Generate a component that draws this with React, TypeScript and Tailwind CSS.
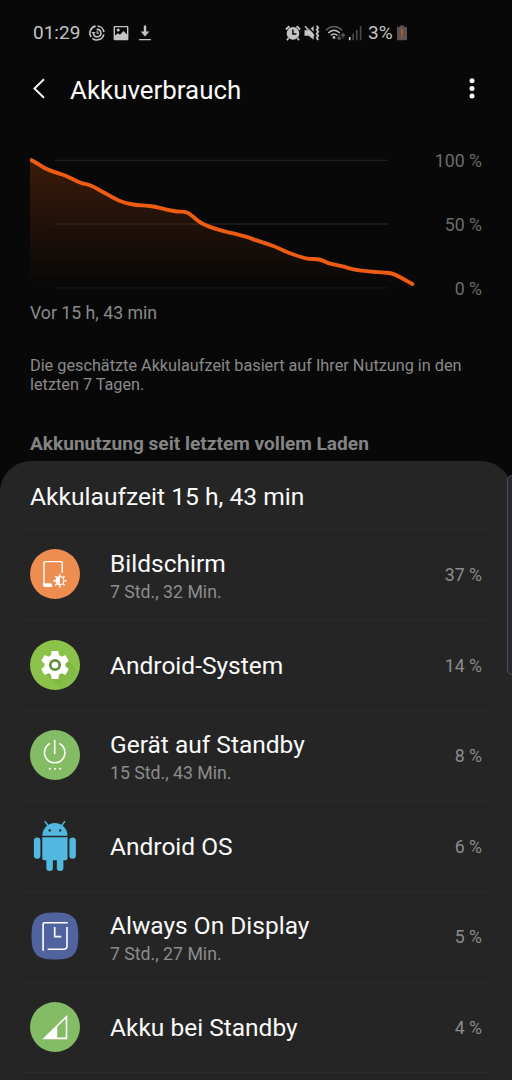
import type { ReactNode } from "react";

type Point = [number, number];

// Battery level over time, in chart pixels
const LEVELS: Point[] = [
  [0, 9.5], [6, 12.7], [15, 18.3], [25, 22.2], [36.7, 26.2], [50, 32.5], [61.7, 36], [73.3, 42.2],
  [90, 51], [103.3, 54.5], [121.7, 56.2], [136.7, 59.6], [146.7, 61.5], [157.5, 62.8],
  [171.7, 73.2], [190, 80.2], [203.3, 83.4], [218.3, 87.4], [226, 90.2], [242.7, 95.8],
  [259.3, 103], [276, 108.3], [289.3, 109.5], [299.3, 113.4], [312.7, 116.4], [326, 119.9],
  [342.7, 121.7], [354.3, 122.6], [364.3, 124.4], [382.7, 134.2],
];

const smoothPath = (pts: Point[]) => {
  let d = `M${pts[0][0]} ${pts[0][1]}`;
  for (let i = 0; i < pts.length - 1; i++) {
    const p0 = pts[i - 1] ?? pts[i];
    const p1 = pts[i];
    const p2 = pts[i + 1];
    const p3 = pts[i + 2] ?? p2;
    d += ` C${p1[0] + (p2[0] - p0[0]) / 6} ${p1[1] + (p2[1] - p0[1]) / 6} ${p2[0] - (p3[0] - p1[0]) / 6} ${p2[1] - (p3[1] - p1[1]) / 6} ${p2[0]} ${p2[1]}`;
  }
  return d;
};

const LINE = smoothPath(LEVELS);

function BatteryChart() {
  return (
    <svg width="390" height="148" viewBox="0 0 390 148" className="shrink-0">
      <defs>
        <linearGradient id="fill" x1="0" y1="9" x2="0" y2="136" gradientUnits="userSpaceOnUse">
          <stop offset="0" stopColor="#f35b12" stopOpacity="0.22" />
          <stop offset="1" stopColor="#f35b12" stopOpacity="0" />
        </linearGradient>
      </defs>
      <path d="M25 10.4H358M25 74H358" stroke="#1e1e1e" strokeWidth="1.3" />
      <path d="M25 137.8H358" stroke="#151515" strokeWidth="1.2" />
      <path d={`${LINE} V138 H0 Z`} fill="url(#fill)" />
      <path d={LINE} fill="none" stroke="#ed5c12" strokeWidth="3.9" strokeLinejoin="round" />
      <circle cx="382.5" cy="134.1" r="1.95" fill="#ed5c12" />
    </svg>
  );
}

function StatusBar() {
  return (
    <div className="flex h-[66px] shrink-0 items-center pl-[33px] text-[19px] leading-6 text-[#c4c4c4]">
      <span className="w-[47px] whitespace-nowrap">01:29</span>
      <svg width="16" height="16" viewBox="0 0 16 16" className="ml-[9px]" fill="none" stroke="#c4c4c4">
        <path d="M8.6 1A7 7 0 0 1 14.9 7.2M14.8 9.4A7 7 0 0 1 3.4 13.3M2.2 12A7 7 0 0 1 6.6 1.1" strokeWidth="1.6" />
        <path d="M4.6 9A3.7 3.7 0 1 0 7.6 4.4" strokeWidth="1.6" />
        <path d="M8.2 5.8V8.3H10" strokeWidth="1.1" />
        <path d="M2.4 6.9H6.6L4.4 9.6Z" fill="#c4c4c4" stroke="none" />
      </svg>
      <svg width="16" height="16" viewBox="0 0 16 16" className="ml-2">
        <path fill="#c4c4c4" fillRule="evenodd" d="M1.9.9H14.1Q15.4.9 15.4 2.2V13.9Q15.4 15.2 14.1 15.2H1.9Q.6 15.2.6 13.9V2.2Q.6.9 1.9.9ZM2 2.3V10.5L5 8.2 7 9.8 10.5 6 14 9.5V2.3Z" />
        <circle cx="5.2" cy="5.1" r="1.5" fill="#c4c4c4" />
      </svg>
      <svg width="12" height="16" viewBox="0 0 12 16" className="ml-[10px]" fill="#c4c4c4">
        <path d="M4.8.5H7.2V6.6H10.3L6 11.6 1.7 6.6H4.8ZM.1 13.9H11.9V15.3H.1Z" />
      </svg>
      <svg width="16" height="16" viewBox="0 0 16 16" className="ml-[134px]">
        <circle cx="8" cy="8.4" r="6.3" fill="#c4c4c4" />
        <path d="M.9 4.5L4.4 1.3M15.1 4.5L11.6 1.3" stroke="#c4c4c4" strokeWidth="2" />
        <path d="M3.6 13L2 15.2M12.4 13L14 15.2" stroke="#c4c4c4" strokeWidth="1.8" />
        <path d="M7.9 4.6V9H11.4" stroke="#080808" strokeWidth="1.5" fill="none" />
      </svg>
      <svg width="16" height="16" viewBox="0 0 16 16" className="ml-[3px]">
        <path d="M.5 5.2H4.7L9.6 1V14.8L4.7 10.8H.5Z" fill="#c4c4c4" />
        <path d="M2.3.2L11 9" stroke="#080808" strokeWidth="1.5" />
        <path d="M1 1.2L10 11" stroke="#c4c4c4" strokeWidth="1.5" />
        <path d="M12.7.8L14.2 2.8 12.7 4.8 14.2 6.8 12.7 8.8 14.2 10.8 12.7 12.8 14.2 15" stroke="#c4c4c4" strokeWidth="1.8" fill="none" />
      </svg>
      <svg width="21" height="16" viewBox="0 0 21 16" className="ml-[5px]" fill="none">
        <path d="M.8 5.2Q9 -2.3 17.2 5.2" stroke="#5d5d5d" strokeWidth="1.4" />
        <path d="M3.2 8Q9 2.5 14.8 8" stroke="#c4c4c4" strokeWidth="1.4" />
        <path d="M5.7 10.4Q9 7.5 12.3 10.4" stroke="#c4c4c4" strokeWidth="1.4" />
        <circle cx="9" cy="12.4" r="1.4" fill="#c4c4c4" />
        <path d="M14.1 9.5V14.3M12.2 12.5L14.1 14.5 16 12.5M18 13.3V9M16.1 10.7L18 8.7 19.9 10.7" stroke="#585858" strokeWidth="1.3" />
      </svg>
      <svg width="15" height="16" viewBox="0 0 15 16" className="ml-[2px]">
        <path d="M.9 12H2.5V15.2H.9Z" fill="#dadada" />
        <path d="M4.4 8.6H6V15.2H4.4ZM8 4.9H9.6V15.2H8ZM11.8 1H13.4V15.2H11.8Z" fill="#4b4b4b" />
      </svg>
      <span className="ml-[5px] w-[25px] whitespace-nowrap">3%</span>
      <svg width="12" height="16" viewBox="0 0 12 16" className="ml-[3px]">
        <path d="M4 .4H8V1.8H10Q11 1.8 11 2.8V14.3Q11 15.3 10 15.3H2Q1 15.3 1 14.3V2.8Q1 1.8 2 1.8H4Z" fill="#5a5350" />
        <path d="M4.9 4H7.1L6.8 10.3H5.2ZM5.1 11.2H6.9V12.9H5.1Z" fill="#b0582f" />
      </svg>
    </div>
  );
}

function ScreenIcon() {
  return (
    <svg width="50" height="50" viewBox="0 0 50 50">
      <circle cx="25" cy="25" r="25" fill="#ee8d50" />
      <path d="M14 36.4V13.4Q14 12.6 14.8 12.6H31.4Q32.2 12.6 32.2 13.4V23.8" stroke="#fff" strokeWidth="1.4" fill="none" />
      <path d="M13.3 34.2H21.2L22.6 38H14.8Q13.3 38 13.3 36.5Z" fill="#fff" />
      <circle cx="29.9" cy="31.7" r="4" stroke="#fff" strokeWidth="1.3" fill="none" />
      <path d="M29.9 27.7A4 4 0 0 0 29.9 35.7Z" fill="#fff" />
      <path
        d="M29.9 25V27M29.9 36.4V38.4M23.2 31.7H25.2M34.6 31.7H36.6M25.2 27L26.6 28.4M33.2 35L34.6 36.4M25.2 36.4L26.6 35M33.2 28.4L34.6 27"
        stroke="#fff"
        strokeWidth="1.5"
      />
    </svg>
  );
}

function SystemIcon() {
  return (
    <svg width="50" height="50" viewBox="0 0 50 50">
      <defs>
        <clipPath id="disc">
          <circle cx="25" cy="25" r="25" />
        </clipPath>
        <linearGradient id="shade" x1="20" y1="20" x2="40" y2="44" gradientUnits="userSpaceOnUse">
          <stop offset="0" stopColor="#67983a" />
          <stop offset="1" stopColor="#86be48" />
        </linearGradient>
      </defs>
      <circle cx="25" cy="25" r="25" fill="#8bc34a" />
      <path d="M13 31L32 50H50V34L37 19Z" fill="url(#shade)" opacity="0.6" clipPath="url(#disc)" />
      <g transform="translate(8.2 8.2) scale(1.4)">
        <path
          fill="#fff"
          d="M19.43 12.98c.04-.32.07-.64.07-.98s-.03-.66-.07-.98l2.11-1.65c.19-.15.24-.42.12-.64l-2-3.46c-.12-.22-.39-.3-.61-.22l-2.49 1c-.52-.4-1.08-.73-1.69-.98l-.38-2.65C14.46 2.18 14.25 2 14 2h-4c-.25 0-.46.18-.49.42l-.38 2.65c-.61.25-1.17.59-1.69.98l-2.49-1c-.23-.09-.49 0-.61.22l-2 3.46c-.13.22-.07.49.12.64l2.11 1.65c-.04.32-.07.65-.07.98s.03.66.07.98l-2.11 1.65c-.19.15-.24.42-.12.64l2 3.46c.12.22.39.3.61.22l2.49-1c.52.4 1.08.73 1.69.98l.38 2.65c.03.24.24.42.49.42h4c.25 0 .46-.18.49-.42l.38-2.65c.61-.25 1.17-.59 1.69-.98l2.49 1c.23.09.49 0 .61-.22l2-3.46c.12-.22.07-.49-.12-.64l-2.11-1.65z"
        />
      </g>
      <circle cx="25" cy="25" r="4.7" stroke="#5f8f36" strokeWidth="2.7" fill="#fff" />
    </svg>
  );
}

function StandbyIcon() {
  return (
    <svg width="50" height="50" viewBox="0 0 50 50">
      <circle cx="25" cy="25" r="25" fill="#84bb65" />
      <path d="M24.7 10.5V23.5M19.5 13.8A10.2 10.2 0 1 0 29.9 13.8" stroke="#fff" strokeWidth="1.6" fill="none" strokeLinecap="round" />
      <circle cx="19.8" cy="38.8" r="1" fill="#fff" />
      <circle cx="25" cy="38.8" r="1" fill="#fff" />
      <circle cx="30.2" cy="38.8" r="1" fill="#fff" />
    </svg>
  );
}

function AndroidIcon() {
  return (
    <svg width="50" height="50" viewBox="0 0 50 50" fill="#51b9df">
      <path d="M12.3 14.8A12.6 12.8 0 0 1 37.5 14.8Z" />
      <path d="M17.8 4.3L15.2.8M32 4.3L34.6.8" stroke="#51b9df" strokeWidth="1.5" strokeLinecap="round" />
      <circle cx="19.7" cy="9.4" r="1.2" fill="#252525" />
      <circle cx="30.2" cy="9.4" r="1.2" fill="#252525" />
      <path d="M12.3 16.3H37.5V37.2Q37.5 39.2 35.5 39.2H14.3Q12.3 39.2 12.3 37.2Z" />
      <rect x="3.9" y="16.5" width="6.5" height="21.2" rx="3.2" />
      <rect x="39.4" y="16.5" width="6.5" height="21.2" rx="3.2" />
      <rect x="16.3" y="33" width="6.6" height="17" rx="3.2" />
      <rect x="26.8" y="33" width="6.6" height="17" rx="3.2" />
    </svg>
  );
}

function DisplayIcon() {
  return (
    <svg width="50" height="50" viewBox="0 0 50 50">
      <path d="M25 1.4C43 1.4 48.3 6.6 48.3 25S43 48.6 25 48.6 1.5 43.4 1.5 25 7 1.4 25 1.4Z" fill="#51639f" />
      <path d="M13.1 39.8V13.2Q13.1 11.7 14.6 11.7H37.7" stroke="#fff" strokeWidth="1.6" fill="none" />
      <path d="M17.7 38.3H33.5Q37 38.3 37 34.8V15.9" stroke="#fff" strokeWidth="1.6" fill="none" />
      <path d="M24.7 16V25.6H31.2" stroke="#fff" strokeWidth="1.6" fill="none" />
    </svg>
  );
}

function CellIcon() {
  return (
    <svg width="50" height="50" viewBox="0 0 50 50">
      <circle cx="25" cy="25" r="25" fill="#84bb65" />
      <path fill="#fff" fillRule="evenodd" d="M12.3 37.3L37.3 12.8V37.3ZM27.2 24.8V35.6H35.7V16.6Z" />
    </svg>
  );
}

interface Usage {
  name: string;
  time?: string;
  percent: string;
  icon: ReactNode;
}

const USAGE: Usage[] = [
  { name: "Bildschirm", time: "7 Std., 32 Min.", percent: "37 %", icon: <ScreenIcon /> },
  { name: "Android-System", percent: "14 %", icon: <SystemIcon /> },
  { name: "Gerät auf Standby", time: "15 Std., 43 Min.", percent: "8 %", icon: <StandbyIcon /> },
  { name: "Android OS", percent: "6 %", icon: <AndroidIcon /> },
  { name: "Always On Display", time: "7 Std., 27 Min.", percent: "5 %", icon: <DisplayIcon /> },
  { name: "Akku bei Standby", percent: "4 %", icon: <CellIcon /> },
];

function UsageRow({ name, time, percent, icon }: Usage) {
  return (
    <div className={`mr-6 ml-6 flex items-center border-t border-[#2b2b2b] pr-1.5 pl-1.5 ${time ? "h-[91px]" : "h-[90px]"}`}>
      <div className="-mt-0.5 shrink-0">{icon}</div>
      <div className={`ml-[30px] flex-1 ${time ? "pt-[3px]" : ""}`}>
        <p className="text-[24.5px] leading-[30px] text-[#fafafa]">{name}</p>
        {time && <p className="text-[17.7px] leading-[26px] text-[#8c8c8c]">{time}</p>}
      </div>
      <span className="text-[17.7px] leading-6 text-[#8c8c8c]">{percent}</span>
    </div>
  );
}

export default function App() {
  return (
    <div className="relative flex h-[1080px] w-[512px] flex-col overflow-hidden bg-[#080808] font-['Roboto',sans-serif]">
      <StatusBar />

      <header className="flex h-12 shrink-0 items-center pr-[34px] pl-[30px]">
        <svg width="18" height="24" viewBox="0 0 18 24" className="shrink-0">
          <path d="M14 1.2L4.4 10.5 14 19.8" fill="none" stroke="#fafafa" strokeWidth="1.9" />
        </svg>
        <h1 className="ml-[22px] flex-1 pb-px text-[25.9px] leading-8 text-[#fafafa]">Akkuverbrauch</h1>
        <svg width="12" height="24" viewBox="0 0 12 24" fill="#fafafa">
          <circle cx="6" cy="2.8" r="2.5" />
          <circle cx="6" cy="10.4" r="2.5" />
          <circle cx="6" cy="18" r="2.5" />
        </svg>
      </header>

      <section className="mt-9 flex h-[148px] shrink-0 pl-[30px]">
        <BatteryChart />
        <div className="-mb-px flex w-[62px] flex-col justify-between pt-px text-right text-[17.7px] leading-5 whitespace-nowrap text-[#6c6c6c]">
          <span>100 %</span>
          <span>50 %</span>
          <span>0 %</span>
        </div>
      </section>

      <p className="mt-[3px] px-[30px] text-[17.7px] leading-6 text-[#8a8a8a]">Vor 15 h, 43 min</p>
      <p className="mt-[31px] px-[30px] text-[16.25px] leading-[19px] whitespace-nowrap text-[#8a8a8a]">
        Die geschätzte Akkulaufzeit basiert auf Ihrer Nutzung in den
        <br />
        letzten 7 Tagen.
      </p>
      <h2 className="mt-[38px] px-[30px] text-[19.1px] leading-6 font-bold text-[#848484]">
        Akkunutzung seit letztem vollem Laden
      </h2>

      <main className="mt-[5px] h-[640px] shrink-0 rounded-t-[31px] bg-[#252525]">
        <h3 className="flex h-[68px] items-center px-[30px] pt-[3px] text-[24.6px] leading-8 text-[#fafafa]">
          Akkulaufzeit 15 h, 43 min
        </h3>
        {USAGE.map((u) => (
          <UsageRow key={u.name} {...u} />
        ))}
        <div className="mx-6 border-t border-[#2b2b2b]" />
      </main>

      {/* Edge panel handle */}
      <div className="absolute top-[475px] -right-2 h-[200px] w-[13px] rounded-[5px] border border-[#514e5c] bg-[#2a2735]" />
    </div>
  );
}
